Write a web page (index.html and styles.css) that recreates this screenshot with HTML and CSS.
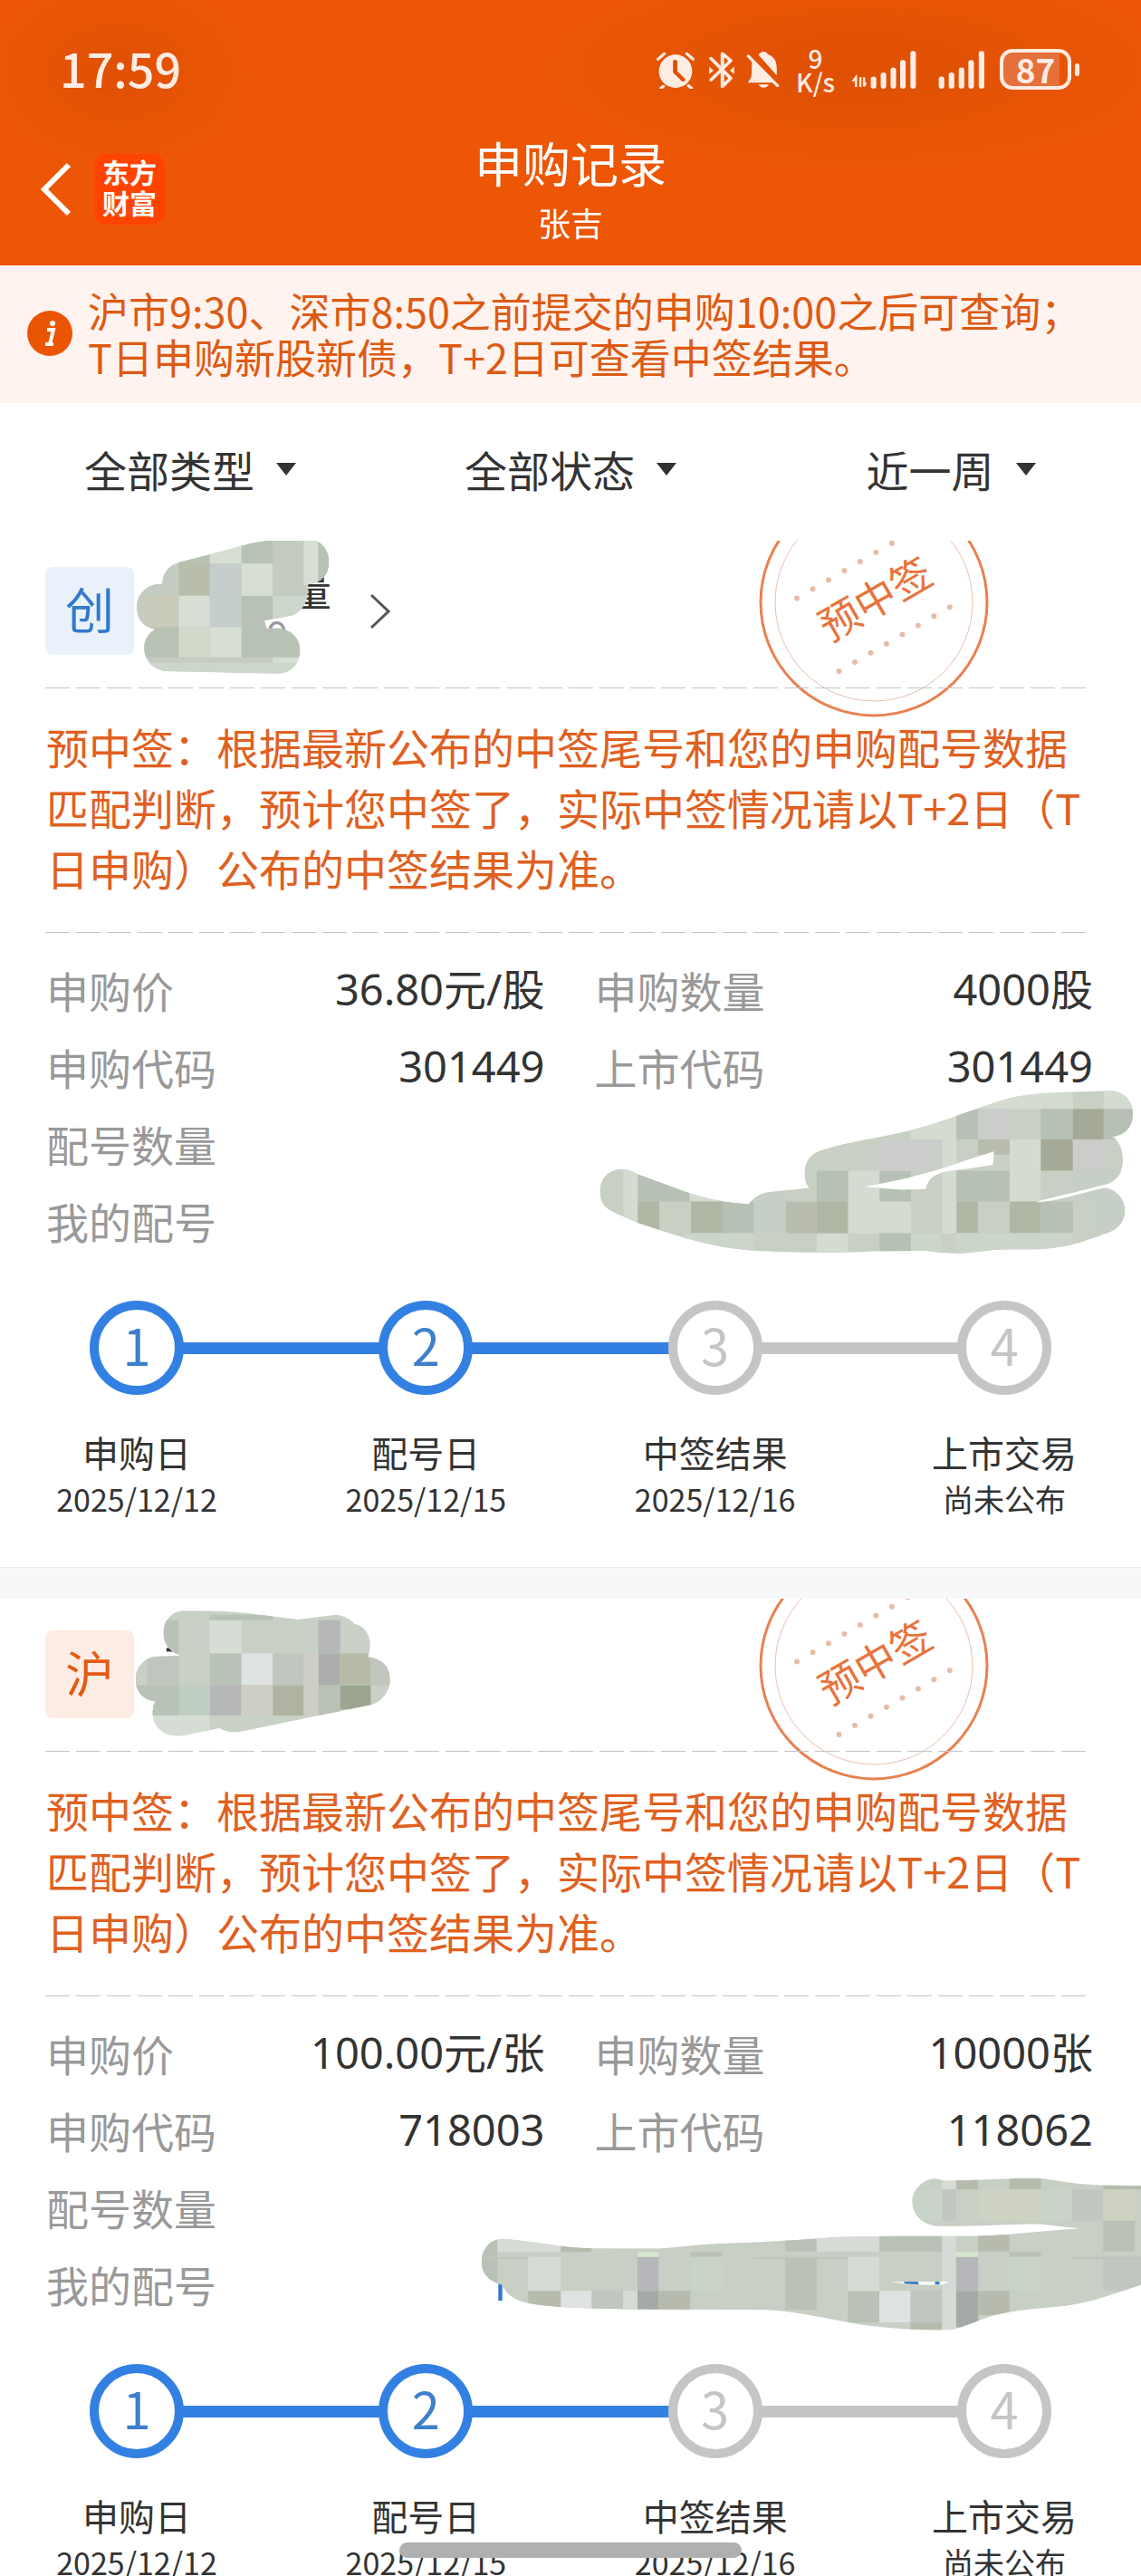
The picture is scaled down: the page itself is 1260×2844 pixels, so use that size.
FILE: index.html
```html
<!DOCTYPE html>
<html lang="zh-CN">
<head>
<meta charset="utf-8">
<meta name="viewport" content="width=device-width, initial-scale=1">
<title>申购记录</title>
<link rel="stylesheet" href="styles.css">
</head>
<body>
<div class="app">
  <header class="header">
    <div class="status">
      <span class="status-time">17:59</span>
      <div class="status-icons">
        <svg class="ic-alarm" viewBox="252 170 110 126" preserveAspectRatio="none" aria-hidden="true"><path d="M259 198l17-18M355 198l-17-18M273 288l-6 6M343 286l8 8" stroke="#ffece2" stroke-width="9" stroke-linecap="round"/><ellipse cx="307" cy="238" rx="46" ry="55" fill="#ffece2"/><path d="M306 206v34l22 26" fill="none" stroke="#de5105" stroke-width="12" stroke-linecap="round" stroke-linejoin="round"/></svg>
        <svg class="ic-bt" viewBox="394 168 76 130" preserveAspectRatio="none" aria-hidden="true"><path d="M402 194l55 68-23 28v-112l23 24-55 66" fill="none" stroke="#ffece2" stroke-width="10" stroke-linejoin="round" stroke-linecap="round"/><path d="M397 222l12 14-12 12zM467 222l-12 14 12 12z" fill="#ffece2"/></svg>
        <svg class="ic-bell" viewBox="498 170 92 126" preserveAspectRatio="none" aria-hidden="true"><path d="M514 206l62 70h-74l9-16c4-14 1-34 3-54zM532 184c6-14 20-14 26-2 20 10 24 26 24 50v20zM532 282h28c-4 14-24 14-28 0z" fill="#ffece2"/><path d="M504 188l80 98" stroke="#ffece2" stroke-width="9" stroke-linecap="round"/></svg>
        <span class="net"><span>9</span><span>K/s</span></span>
        <svg class="ic-sig1" viewBox="783 172 178 124" preserveAspectRatio="none" aria-hidden="true"><path d="M844 264v24M871 250v38M898 234v54M924 210v78M952 180v108" stroke="#ffece2" stroke-width="15" stroke-linecap="round"/><path d="M796 290v-32l-9 14M808 258v32M818 258v30l5-12" fill="none" stroke="#ffece2" stroke-width="6"/></svg>
        <svg class="ic-sig2" viewBox="1020 172 127 124" preserveAspectRatio="none" aria-hidden="true"><path d="M1029 264v24M1056 250v38M1083 234v54M1109 210v78M1137 180v108" stroke="#ffece2" stroke-width="15" stroke-linecap="round"/></svg>
        <span class="battery"><span class="battery-body">87</span><span class="battery-tip"></span></span>
      </div>
    </div>
    <nav class="nav">
      <div class="nav-left">
        <button class="back" type="button" aria-label="返回"><svg viewBox="0 0 36 62" aria-hidden="true"><path d="M32 4L5 31l27 27" fill="none" stroke="#fff" stroke-width="6"/></svg></button>
        <a class="logo" href="#">东方<br>财富</a>
      </div>
      <div class="nav-title"><h1>申购记录</h1><p>张吉</p></div>
    </nav>
  </header>

  <div class="notice">
    <svg class="notice-icon" viewBox="0 0 51 51" aria-hidden="true"><circle cx="25" cy="25" r="25" fill="#ea5504"/><circle cx="28" cy="14" r="3" fill="#fff"/><path d="M22 21h7l-4 16h4M20 37h5" fill="none" stroke="#fff" stroke-width="4"/></svg>
    <p>沪市9:30、深市8:50之前提交的申购10:00之后可查询；<br>T日申购新股新债，T+2日可查看中签结果。</p>
  </div>

  <form class="filters">
    <label class="filter"><select aria-label="类型"><option>全部类型</option></select></label>
    <label class="filter"><select aria-label="状态"><option>全部状态</option></select></label>
    <label class="filter"><select aria-label="时间"><option>近一周</option></select></label>
  </form>

  <main class="records">
    <article class="card">
      <div class="card-head">
        <span class="badge badge-blue">创</span>
        <div class="name"><span class="name-main">量</span><span class="name-code">9</span></div>
        <svg class="chevron" viewBox="0 0 22 40" aria-hidden="true"><path d="M1 2l19 18L1 38" fill="none" stroke="#555" stroke-width="3"/></svg>
        <svg class="stamp" viewBox="838 537 256 256" role="img" aria-label="预中签"><circle cx="966" cy="665" r="125" fill="none" stroke="#e98050" stroke-width="3"/><circle cx="966" cy="665" r="109" fill="none" stroke="#e8bfac" stroke-width="1"/><path d="M881 660.500L1007 587.500M927.500 741L1051 669.500" stroke="#e8bba8" stroke-width="6" stroke-linecap="round" stroke-dasharray="0 20.200"/><text x="968" y="678" text-anchor="middle" transform="rotate(-30 968 662)">预中签</text></svg>
        <svg class="smudge smudge-a" viewBox="370 100 550 456" preserveAspectRatio="none" aria-hidden="true">
          <clipPath id="ca"><path d="M447 255C450 215 465 195 493 184L640 138C700 115 740 108 845 105C880 105 906 140 906 182C906 225 885 252 848 257C852 300 835 355 795 362L728 376L734 402L770 402C805 410 826 435 826 475C826 520 800 552 765 552L460 544C420 540 398 505 398 468C398 440 410 418 428 405C395 400 377 370 377 332C377 290 405 255 440 255Z"/></clipPath>
          <g clip-path="url(#ca)"><path fill="#c4cbc0" d="M370 100h550v456h-550z"/><path fill="#b9bdac" d="M493 184h85v110h-85z"/><path fill="#b7c2b4" d="M370 398h123v100h-123zM493 100h85v84h-85zM665 100h86v88h-86zM665 294h86v204h-86zM751 398h80v100h-80zM876 100h40v160h-40z"/><path fill="#d7dfd5" d="M578 100h87v88h-87zM665 188h86v106h-86zM578 398h87v100h-87zM836 100h40v160h-40zM493 294h85v104h-85zM751 498h80v20h-80z"/><path fill="#c6cecb" d="M578 188h87v210h-87z"/><path fill="#cacbbb" d="M405 294h88v104h-88z"/><path fill="#d2d8ca" d="M493 398h85v100h-85z"/><path fill="#ccd6cb" d="M751 294h100v80h-100zM405 516h420v40h-420z"/></g>
        </svg>
      </div>
      <p class="tip">预中签：根据最新公布的中签尾号和您的申购配号数据匹配判断，预计您中签了，实际中签情况请以T+2日（T日申购）公布的中签结果为准。</p>
      <dl class="facts">
        <div><dt>申购价</dt><dd>36.80元/股</dd></div>
        <div><dt>申购数量</dt><dd>4000股</dd></div>
        <div><dt>申购代码</dt><dd>301449</dd></div>
        <div><dt>上市代码</dt><dd>301449</dd></div>
        <div class="wide"><dt>配号数量</dt><dd></dd></div>
        <div class="wide"><dt>我的配号</dt><dd></dd></div>
        <svg class="smudge smudge-b" viewBox="100 70 1450 545" preserveAspectRatio="none" aria-hidden="true">
          <clipPath id="cb"><path clip-rule="evenodd" d="M104 408C104 360 130 333 165 333C180 333 195 343 206 350L345 412C400 434 450 444 506 449C520 425 535 415 560 409L670 395C655 375 657 350 659 325C665 295 680 280 705 270C780 240 860 230 945 204C1040 175 1120 130 1200 102C1280 76 1380 80 1485 74C1520 76 1545 105 1545 150C1545 195 1525 218 1490 226C1510 240 1518 275 1518 305C1518 345 1500 375 1470 384L1290 438L1286 443C1330 440 1400 415 1468 395C1500 400 1523 430 1523 470C1523 510 1500 535 1475 544C1400 580 1350 597 1270 598C1170 597 1150 602 1120 607C1080 614 1040 612 990 603L860 604C720 612 620 608 520 602C400 590 330 560 206 510L140 475C115 462 104 440 104 408ZM812 391C900 375 980 350 1040 325L1170 274L1167 318C1120 330 1070 335 1030 343C1000 355 988 375 985 399L920 402Z"/></clipPath>
          <g clip-path="url(#cb)"><path fill="#c8cfc3" d="M100 70h1450v545h-1450z"/><path fill="#d4dbd1" d="M1068 70h315v64h-315zM1466 70h84v64h-84zM167 320h39v200h-39zM1029 130h39v415h-39zM345 400h90v40h-90zM777 338h83v207h-83zM860 440h85v105h-85zM1212 235h84v205h-84zM945 180h84v55h-84zM690 545h84v70h-84z"/><path fill="#b7c0b4" d="M206 340h140v100h-140zM435 440h85v105h-85zM690 338h84v102h-84zM860 338h85v102h-85zM1068 134h58v101h-58zM1296 134h87v101h-87zM1466 134h84v101h-84zM1068 338h144v102h-144zM1296 440h87v105h-87zM860 545h85v70h-85z"/><path fill="#b0b7a5" d="M206 440h58v105h-58zM350 440h85v105h-85zM690 440h84v105h-84zM1068 440h58v105h-58zM1212 440h84v105h-84z"/><path fill="#a5a997" d="M1383 134h83v101h-83zM1296 235h87v103h-87z"/><path fill="#cbcdca" d="M860 235h169v103h-169zM1126 134h86v101h-86zM1383 235h83v103h-83z"/><path fill="#b9bdb0" d="M606 440h84v105h-84zM1466 440h84v105h-84zM1126 235h86v50h-86z"/><path fill="#c6cfc5" d="M520 400h86v145h-86zM1383 338h150v207h-83v-105h-67z"/><path fill="#ccd5c9" d="M330 545h190v70h-190zM945 545h84v70h-84zM1068 545h315v70h-315z"/></g>
        </svg>
      </dl>
      <ol class="steps">
        <li class="done"><b>1</b><span>申购日</span><time>2025/12/12</time></li>
        <li class="done"><b>2</b><span>配号日</span><time>2025/12/15</time></li>
        <li><b>3</b><span>中签结果</span><time>2025/12/16</time></li>
        <li><b>4</b><span>上市交易</span><time>尚未公布</time></li>
      </ol>
    </article>

    <article class="card">
      <div class="card-head">
        <span class="badge badge-orange">沪</span>
        <svg class="stamp" viewBox="838 537 256 256" role="img" aria-label="预中签"><circle cx="966" cy="665" r="125" fill="none" stroke="#e98050" stroke-width="3"/><circle cx="966" cy="665" r="109" fill="none" stroke="#e8bfac" stroke-width="1"/><path d="M881 660.500L1007 587.500M927.500 741L1051 669.500" stroke="#e8bba8" stroke-width="6" stroke-linecap="round" stroke-dasharray="0 20.200"/><text x="968" y="678" text-anchor="middle" transform="rotate(-30 968 662)">预中签</text></svg>
        <svg class="smudge smudge-c" viewBox="370 110 706 422" preserveAspectRatio="none" aria-hidden="true">
          <path fill="#333" d="M459 237h22v12h-22z"/>
          <clipPath id="cc"><path d="M451 188C451 145 475 114 508 114C620 114 670 120 700 125L820 143L925 127C950 130 965 145 975 157C1005 165 1018 195 1018 230Q1018 250 1012 267C1050 270 1073 300 1073 342C1073 380 1050 415 1022 424L660 514C640 518 620 512 604 502L500 527C450 532 421 495 421 450Q421 430 428 414C395 410 374 380 374 340C374 300 400 266 435 265L496 262C470 250 451 225 451 188Z"/></clipPath>
          <g clip-path="url(#cc)"><path fill="#c9d0c5" d="M370 110h706v422h-706z"/><path fill="#d6ddd5" d="M578 145h87v110h-87zM421 460h157v72h-157z"/><path fill="#b8c2b6" d="M578 255h87v105h-87zM370 360h123v100h-123zM578 127h173v18h-173zM876 360h60v100h-60zM451 145h42v110h-42z"/><path fill="#dfe4e3" d="M665 255h86v105h-86z"/><path fill="#b6b7b9" d="M876 145h60v110h-60zM578 360h87v100h-87z"/><path fill="#abaeac" d="M876 255h60v105h-60z"/><path fill="#b1b3a2" d="M751 360h85v100h-85z"/><path fill="#9ca590" d="M936 360h84v80h-84z"/><path fill="#b8bbaa" d="M936 255h84v105h-84z"/><path fill="#c0c5bd" d="M751 255h85v105h-85zM405 265h88v95h-88zM1020 255h56v105h-56z"/><path fill="#cecec6" d="M665 360h86v100h-86zM836 255h40v205h-40z"/><path fill="#c0cec1" d="M493 360h85v100h-85z"/></g>
        </svg>
      </div>
      <p class="tip">预中签：根据最新公布的中签尾号和您的申购配号数据匹配判断，预计您中签了，实际中签情况请以T+2日（T日申购）公布的中签结果为准。</p>
      <dl class="facts">
        <div><dt>申购价</dt><dd>100.00元/张</dd></div>
        <div><dt>申购数量</dt><dd>10000张</dd></div>
        <div><dt>申购代码</dt><dd>718003</dd></div>
        <div><dt>上市代码</dt><dd>118062</dd></div>
        <div class="wide"><dt>配号数量</dt><dd></dd></div>
        <div class="wide"><dt>我的配号</dt><dd></dd></div>
        <svg class="smudge smudge-d" viewBox="60 70 1508 512" preserveAspectRatio="none" aria-hidden="true">
          <path fill="#3279cc" d="M104 422h9v58h-9zM1024 411h34l4 16h-30zM1099 413h10v14h-10z"/>
          <clipPath id="cd"><path clip-rule="evenodd" d="M66 352C66 310 85 276 115 276C190 284 240 306 320 307L470 308C530 300 570 294 620 291C700 287 760 282 830 275C900 267 960 267 1180 267C1270 264 1330 250 1428 242L1340 227C1270 226 1180 236 1105 234C1070 230 1047 195 1047 152C1047 115 1070 78 1100 77L1120 84C1190 83 1260 74 1340 76C1390 85 1420 97 1490 99L1568 101V428C1500 460 1450 490 1380 500C1310 510 1250 515 1200 545C1170 560 1150 577 1120 577C1060 578 1000 572 960 565C880 552 800 515 710 510L400 509C310 506 220 505 160 485C130 470 120 450 112 428C80 415 66 390 66 352ZM998 418Q1065 432 1118 426L1132 417Z"/></clipPath>
          <g clip-path="url(#cd)"><path fill="#c8cfc4" d="M60 70h1508v512h-1508z"/><path fill="#b5bcac" d="M1147 80h50v33h-50zM1268 70h72v43h-72zM246 290h70v29h-70zM1043 552h72v30h-72zM1482 90h86v23h-86z"/><path fill="#bac2b7" d="M66 270h36v170h-36zM757 270h72v48h-72zM972 260h142v58h-142zM1482 216h72v102h-72zM542 319h72v17h-72zM1268 319h72v17h-72zM757 336h72v174h-72zM900 448h72v104h-72z"/><path fill="#d6dcd5" d="M172 336h74v112h-74zM900 336h72v112h-72zM1115 240h32v210h-32zM102 270h144v49h-144zM829 260h143v58h-143zM388 448h33v65h-33zM1115 448h32v130h-32zM1115 80h32v33h-32z"/><path fill="#dfe4e2" d="M246 448h70v65h-70zM972 448h71v104h-71z"/><path fill="#b5b7ba" d="M421 336h48v112h-48zM1147 336h50v112h-50z"/><path fill="#a6aaa6" d="M421 448h48v65h-48zM1147 448h50v120h-50z"/><path fill="#b6bbae" d="M172 448h74v65h-74zM469 448h72v65h-72zM1197 448h71v80h-71zM1197 262h71v56h-71z"/><path fill="#c1c6c0" d="M318 448h70v65h-70zM1043 448h71v104h-71zM1482 336h86v112h-86zM1115 113h32v103h-32zM1410 113h72v103h-72z"/><path fill="#c8d4c8" d="M542 336h72v112h-72zM1268 336h72v112h-72zM1047 113h68v103h-68zM1340 113h70v103h-70z"/><path fill="#cdd2c3" d="M1197 113h143v103h-143zM1482 113h72v103h-72z"/><path fill="#d7e6d0" d="M421 319h48v17h-48zM1147 319h50v17h-50z"/><path fill="#bec4b9" d="M60 336h112v6h-112zM686 336h214v6h-214zM1410 336h158v6h-158z"/></g>
        </svg>
      </dl>
      <ol class="steps">
        <li class="done"><b>1</b><span>申购日</span><time>2025/12/12</time></li>
        <li class="done"><b>2</b><span>配号日</span><time>2025/12/15</time></li>
        <li><b>3</b><span>中签结果</span><time>2025/12/16</time></li>
        <li><b>4</b><span>上市交易</span><time>尚未公布</time></li>
      </ol>
    </article>
  </main>
  <div class="home-bar"></div>
</div>
</body>
</html>
```
FILE: styles.css
```css
* { box-sizing: border-box; margin: 0; padding: 0; }
body {
  font-family: "Noto Sans CJK SC", sans-serif;
  color: #333;
  background: #fff;
}
.app {
  height: 100vh;
  display: flex;
  flex-direction: column;
  overflow: hidden;
}

/* header */
.header {
  flex: none;
  color: #fff;
  background:
    radial-gradient(ellipse 140px 100px at 130px 80px, #e05105 10%, transparent),
    radial-gradient(ellipse 340px 110px at calc(100% - 310px) 75px, #e05105 20%, transparent),
    #ec5605;
}
.status {
  height: 143px;
  padding: 10px 68px 0 66px;
  display: flex;
  align-items: center;
  justify-content: space-between;
  color: #ffece2;
}
.status-time { height: 64px; font-size: 52px; line-height: 60px; font-weight: 500; }
.status-icons { display: flex; align-items: center; }
.status-icons svg { height: 42px; }
.status-icons .ic-alarm { width: 44px; }
.status-icons .ic-bt { width: 30px; margin-left: 14px; }
.status-icons .ic-bell { width: 37px; margin-left: 12px; }
.net {
  margin-left: 18px;
  display: flex;
  flex-direction: column;
  align-items: center;
  font-size: 28px;
  line-height: 26px;
  font-weight: 500;
}
.status-icons .ic-sig1 { width: 72px; margin-left: 18px; }
.status-icons .ic-sig2 { width: 52px; margin-left: 24px; }
.battery { margin-left: 16px; display: flex; align-items: center; gap: 4px; }
.battery-body {
  width: 79px;
  height: 45px;
  border: 4px solid #ffece2;
  border-radius: 14px;
  background: linear-gradient(90deg, #e67039 87%, transparent 87%);
  font-size: 37px;
  line-height: 36px;
  font-weight: 700;
  text-align: center;
}
.battery-tip { width: 5px; height: 14px; border-radius: 3px; background: #ffece2; }

.nav {
  display: grid;
  grid-template-columns: 1fr auto 1fr;
  align-items: center;
  padding: 0 44px 18px;
}
.nav-left { display: flex; align-items: center; gap: 24px; }
.back { border: 0; background: none; width: 36px; height: 62px; }
.back svg { display: block; width: 36px; height: 62px; }
.logo {
  width: 78px;
  height: 78px;
  padding-top: 2px;
  border-radius: 14px;
  background: #ff4400;
  color: #fff;
  font-size: 30px;
  line-height: 34px;
  font-weight: 700;
  text-align: center;
  text-decoration: none;
}
.nav-title { text-align: center; }
.nav-title h1 { font-size: 53px; line-height: 72px; font-weight: 400; }
.nav-title p { font-size: 36px; line-height: 60px; }

/* notice */
.notice {
  flex: none;
  display: flex;
  align-items: center;
  gap: 16px;
  padding: 24px 30px 26px;
  background: #fef3ee;
  color: #dd5a14;
  font-size: 45px;
  line-height: 51px;
  white-space: nowrap;
}
.notice-icon { flex: none; width: 51px; height: 51px; }

/* filters */
.filters {
  flex: none;
  height: 152px;
  padding-bottom: 6px;
  display: grid;
  grid-template-columns: repeat(3, 1fr);
  align-items: center;
  justify-items: center;
}
.filter { display: flex; align-items: center; gap: 24px; }
.filter::after {
  content: "";
  border: 11px solid transparent;
  border-top: 14px solid #333;
  border-bottom: 0;
}
.filter select {
  appearance: none;
  border: 0;
  background: none;
  color: #333;
  font: inherit;
  font-size: 47px;
  line-height: 68px;
}

/* records */
.records { flex: 1; min-height: 0; overflow: auto; scrollbar-width: none; }
.card { overflow: hidden; border-bottom: 1px solid #e9eaeb; }
.card:first-child { margin-top: -6px; }
.card + .card { box-shadow: 0 -34px #f7f8fa; margin-top: 34px; }
.card-head {
  position: relative;
  height: 168px;
  margin: 0 50px;
  padding-top: 35px;
  display: flex;
  align-items: flex-start;
}
.badge {
  width: 98px;
  height: 97px;
  border-radius: 8px;
  font-size: 54px;
  line-height: 92px;
  text-align: center;
}
.badge-blue { background: #e9f1fb; color: #3279cc; }
.badge-orange { background: #fcece3; color: #e25a14; }
.name {
  width: 218px;
  display: flex;
  flex-direction: column;
  align-items: flex-end;
}
.name-main { font-size: 47px; line-height: 46px; }
.name-code { margin-right: 48px; font-size: 42px; line-height: 56px; color: #999; }
.chevron { width: 22px; height: 40px; margin: 29px 0 0 43px; }
.stamp {
  position: absolute;
  right: 117px;
  bottom: -34px;
  width: 256px;
  height: 256px;
  fill: #e8733c;
  font-size: 45px;
}
.smudge { position: absolute; }
.smudge-a { left: 98px; top: 2px; width: 221px; height: 152px; }
.smudge-c { left: 98px; top: 12px; width: 284px; height: 141px; }

.tip, .facts { position: relative; }
.tip::before, .facts::before {
  content: "";
  position: absolute;
  left: 50px;
  right: 58px;
  top: 0;
  height: 1px;
  background: repeating-linear-gradient(90deg, #c4c4c4 0 27px, transparent 27px 34px);
}
.tip {
  padding: 31px 51px 38px;
  color: #e0601f;
  font-size: 47px;
  line-height: 67px;
}
.facts {
  padding: 21px 53px 46px 51px;
  display: grid;
  grid-template-columns: 1fr 1fr;
  column-gap: 55px;
  font-size: 47px;
  line-height: 85px;
}
.facts div { display: flex; justify-content: space-between; }
.facts .wide { grid-column: 1 / -1; }
.facts dt { color: #999; }
.facts dd { font-family: "Noto Sans", "Noto Sans CJK SC", sans-serif; }
.smudge-b { right: 7px; top: 174px; width: 592px; height: 182px; }
.smudge-d { right: 0; top: 200px; width: 731px; height: 171px; }

/* progress */
.steps {
  list-style: none;
  padding: 0 51px 50px;
  display: flex;
  justify-content: space-between;
}
.steps li {
  position: relative;
  width: 200px;
  display: flex;
  flex-direction: column;
  align-items: center;
}
.steps b {
  width: 104px;
  height: 104px;
  margin-bottom: 36px;
  border: 10px solid #c5c5c5;
  border-radius: 50%;
  color: #c5c5c5;
  font-size: 56px;
  line-height: 76px;
  font-weight: 400;
  text-align: center;
}
.steps .done b { border-color: #3380e3; color: #3e7fcc; }
.steps span { font-size: 40px; line-height: 54px; }
.steps time { font-size: 34px; line-height: 50px; }
/* connector running to the next circle */
.steps li:not(:last-child)::after {
  content: "";
  position: absolute;
  left: 151px;
  top: 46px;
  width: calc((100vw - 902px) / 3 + 98px);
  height: 13px;
  background: #c5c5c5;
}
.steps li.done::after { background: #3380e3; }

.home-bar {
  position: fixed;
  left: 35%;
  right: 35%;
  bottom: 20px;
  height: 17px;
  border-radius: 9px;
  background: #b0b0b0;
}
```
